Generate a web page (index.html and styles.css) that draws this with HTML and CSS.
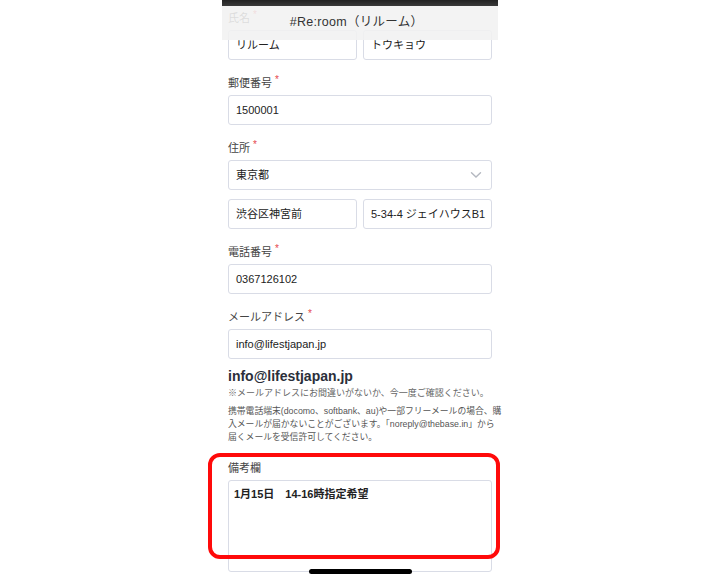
FILE: index.html
```html
<!DOCTYPE html>
<html lang="ja">

<head>
    <meta charset="UTF-8">
    <meta name="viewport" content="width=device-width, initial-scale=1.0">
    <title>#Re:room（リルーム）</title>
    <link rel="stylesheet" href="styles.css">
</head>

<body>
    <div class="phone">
        <header class="topbar">
            <div class="topbar__notch"></div>
            <div class="topbar__title">#Re:room（リルーム）</div>
        </header>

        <form class="form">
            <div class="field">
                <label class="field__label">氏名<span class="req">*</span></label>
                <div class="field__row">
                    <div class="input">リルーム</div>
                    <div class="input">トウキョウ</div>
                </div>
            </div>

            <div class="field">
                <label class="field__label">郵便番号<span class="req">*</span></label>
                <div class="input">1500001</div>
            </div>

            <div class="field">
                <label class="field__label">住所<span class="req">*</span></label>
                <div class="input input--select">
                    東京都
                    <svg class="chevron" width="12" height="8" viewBox="0 0 12 8">
                        <path d="M1.5 1.8 L6 6 L10.5 1.8" fill="none" stroke="#b4b8c0" stroke-width="1.4" stroke-linecap="round" />
                    </svg>
                </div>
                <div class="field__row field__row--spaced">
                    <div class="input">渋谷区神宮前</div>
                    <div class="input">5-34-4 ジェイハウスB1</div>
                </div>
            </div>

            <div class="field">
                <label class="field__label">電話番号<span class="req">*</span></label>
                <div class="input">0367126102</div>
            </div>

            <div class="field">
                <label class="field__label">メールアドレス<span class="req">*</span></label>
                <div class="input">info@lifestjapan.jp</div>
            </div>

            <div class="confirm">
                <p class="confirm__mail">info@lifestjapan.jp</p>
                <p class="confirm__note">※メールアドレスにお間違いがないか、今一度ご確認ください。</p>
                <p class="confirm__text">携帯電話端末(docomo、softbank、au)や一部フリーメールの場合、購<br>入メールが届かないことがございます。「noreply@thebase.in」から<br>届くメールを受信許可してください。</p>
            </div>

            <div class="field field--memo">
                <label class="field__label">備考欄</label>
                <div class="textarea">1月15日　14-16時指定希望</div>
                <div class="highlight"></div>
            </div>
        </form>

        <div class="home-bar"></div>
    </div>
</body>

</html>
```

FILE: styles.css
```css
:root {
    --ff-primary: 'Liberation Sans', 'Noto Sans CJK JP', sans-serif;
    --clr-text: #333;
    --clr-border: #d9dce6;
    --clr-req: #e5484d;
}

* {
    margin: 0;
    padding: 0;
    box-sizing: border-box;
}

body {
    background: #fff;
    color: var(--clr-text);
    font-family: var(--ff-primary);
    overflow: hidden;
    height: 580px;
}

.phone {
    position: relative;
    width: 276px;
    height: 580px;
    margin: 0 auto;
}

/* header lies over the scrolled form */
.topbar {
    position: absolute;
    top: 0;
    left: 0;
    right: 0;
    height: 40px;
    z-index: 10;
    background: rgba(241, 241, 241, 0.88);
}

.topbar__notch {
    height: 6px;
    background: linear-gradient(#222, #3a3a3a);
}

.topbar__title {
    text-align: center;
    font-size: 12.5px;
    line-height: 32px;
    letter-spacing: 0.3px;
    padding-right: 7px;
    color: #333;
}

.form {
    padding: 11px 6px 0;
    display: flex;
    flex-direction: column;
    gap: 16px;
}

.field {
    display: flex;
    flex-direction: column;
    gap: 5px;
}

.field--memo {
    position: relative;
    margin-top: 1px;
}

.field__label {
    display: block;
    height: 14px;
    font-size: 11px;
    line-height: 14px;
    color: #444;
}

.req {
    position: relative;
    top: -4px;
    color: var(--clr-req);
    font-size: 10px;
    margin-left: 3px;
}

.field__row {
    display: flex;
    gap: 6px;
}

.field__row--spaced {
    margin-top: 4px;
}

.field__row .input {
    flex: 1;
}

.input {
    height: 30px;
    border: 1px solid var(--clr-border);
    border-radius: 3px;
    padding: 0 7px;
    font-size: 11px;
    line-height: 28px;
    color: #222;
    white-space: nowrap;
    overflow: hidden;
}

.input--select {
    display: flex;
    justify-content: space-between;
    align-items: center;
}

.chevron {
    margin-right: 2px;
}

.confirm {
    margin-top: -8px;
}

.confirm__mail {
    font-size: 14px;
    font-weight: bold;
    line-height: 18px;
    color: #2b2f3a;
}

.confirm__note {
    font-size: 9px;
    line-height: 14px;
    color: #666;
    margin-top: 1px;
    white-space: nowrap;
}

.confirm__text {
    font-size: 8.8px;
    line-height: 13px;
    color: #555;
    margin-top: 5px;
    white-space: nowrap;
}

.textarea {
    height: 92px;
    border: 1px solid var(--clr-border);
    border-radius: 3px;
    padding: 4px 5px;
    font-size: 11px;
    font-weight: bold;
    color: #222;
}

/* red annotation frame around the memo field */
.highlight {
    position: absolute;
    top: -8px;
    left: -20px;
    width: 292px;
    height: 106px;
    border: 4px solid #ff0a0a;
    border-radius: 12px;
}

.home-bar {
    position: absolute;
    left: 87px;
    bottom: 6px;
    width: 103px;
    height: 5px;
    border-radius: 3px;
    background: #000;
}
```
